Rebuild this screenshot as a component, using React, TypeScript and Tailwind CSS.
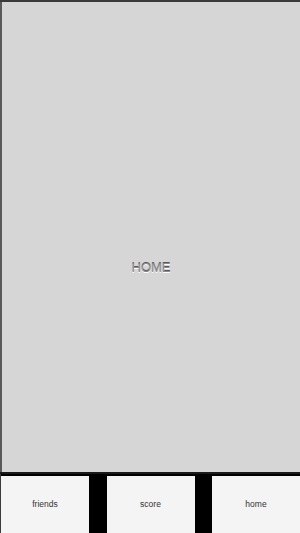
export default function App() {
  const tabs = ["friends", "score", "home"];
  return (
    <div
      className="flex h-[533px] w-[300px] flex-col bg-black"
      style={{ fontFamily: '"Liberation Sans", Arial, sans-serif' }}
    >
      <div className="h-[2px] bg-[#3a3a3a]" />
      <div className="flex flex-1 items-center justify-center border-l-2 border-[#5a5a5a] bg-[#d6d6d6] pt-[62px]">
        <span className="text-[13px] text-[#8a8a8a] [text-shadow:0_1px_0_#ffffff,0_-1px_0_#5a5a5a]">
          HOME
        </span>
      </div>
      <div className="h-[2px] bg-[#1a1a1a]" />
      <div className="flex h-[59px] justify-between border-l border-[#3a3a3a] bg-black pt-[2px]">
        {tabs.map(tab => (
          <div
            key={tab}
            className="flex w-[88px] items-center justify-center bg-[#f4f4f4] text-[8.5px] text-[#333]"
          >
            {tab}
          </div>
        ))}
      </div>
    </div>
  );
}
